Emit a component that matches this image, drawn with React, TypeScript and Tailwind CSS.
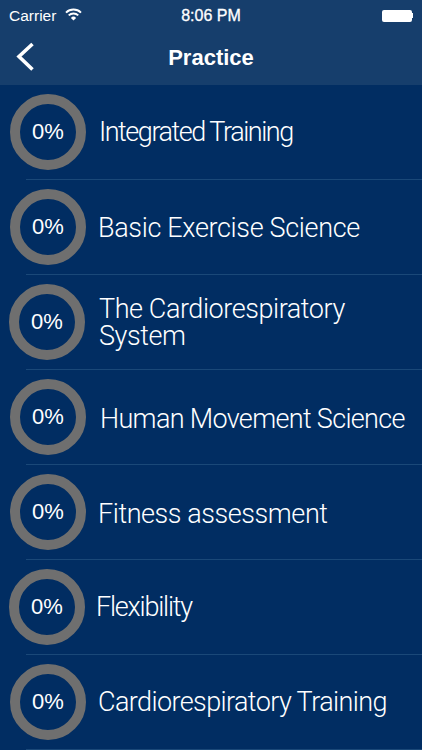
const rows = [
  { title: 'Integrated Training', circle: 'ml-[10px]', text: 'ml-[13px] mt-[2px] tracking-[-1.46px]' },
  { title: 'Basic Exercise Science', circle: 'ml-[10px]', text: 'ml-[12px] mt-[4px] tracking-[-0.33px]' },
  { title: 'The Cardiorespiratory System', circle: 'ml-[9px]', text: 'ml-[14px] mt-[2px] tracking-[-0.43px]' },
  { title: 'Human Movement Science', circle: 'ml-[10px]', text: 'ml-[14px] mt-[5px] tracking-[-0.67px] whitespace-nowrap' },
  { title: 'Fitness assessment', circle: 'ml-[10px]', text: 'ml-[12px] mt-[6px] tracking-[-0.43px]' },
  { title: 'Flexibility', circle: 'ml-[9px]', text: 'ml-[11px] mt-[2px] tracking-[-1.2px]' },
  { title: 'Cardiorespiratory Training', circle: 'ml-[10px]', text: 'ml-[12px] mt-[2px] tracking-[-0.6px] whitespace-nowrap' },
];

function Row({ title, circle, text }: { title: string; circle: string; text: string }) {
  return (
    <div className="relative flex h-[95px] shrink-0 items-center pb-[2px]">
      <div className={`${circle} flex h-[76px] w-[76px] shrink-0 items-center justify-center rounded-full border-[10px] border-[#6f6f6f] font-['Liberation_Sans',sans-serif] text-[22px] text-white`}>
        0%
      </div>
      <div className={`${text} w-[312px] font-['Roboto',sans-serif] text-[27px] leading-[27px] font-light text-white`}>{title}</div>
      <div className="absolute right-0 bottom-0 left-[26px] h-px bg-[#1a4878]" />
    </div>
  );
}

export default function App() {
  return (
    <div className="flex h-[750px] w-[422px] flex-col overflow-hidden bg-[#012d62]">
      <div className="h-[85px] shrink-0 bg-[#163e6c] font-['Liberation_Sans',sans-serif] text-white">
        <div className="grid h-[31px] grid-cols-3 items-center px-[9px] text-[15.5px]">
          <div className="flex items-center gap-[9px]">
            <span>Carrier</span>
            <svg width="17" height="13" viewBox="0 0 17 13" fill="none" stroke="white" strokeWidth="1.9" className="mb-[3px]">
              <path d="M1 4.6a10.8 10.8 0 0 1 15 0" />
              <path d="M3.7 7.4a7 7 0 0 1 9.6 0" />
              <path d="M8.5 12.6 5.9 9.9a3.7 3.7 0 0 1 5.2 0z" fill="white" stroke="none" />
            </svg>
          </div>
          <span className="text-center text-[16px] [-webkit-text-stroke:0.3px_white]">8:06 PM</span>
          <div className="flex items-center justify-end">
            <div className="h-[12px] w-[30px] rounded-[2px] bg-white" />
            <div className="h-[5px] w-[1.5px] bg-white" />
          </div>
        </div>
        <div className="relative flex h-[51px] items-center justify-center">
          <svg width="24" height="32" viewBox="0 0 24 32" fill="none" stroke="white" strokeWidth="3.6" className="absolute top-[10px] left-[14px]">
            <path d="M18.5 3 5 15.5 18.5 28.5" />
          </svg>
          <span className="mt-[2px] text-[22px] font-bold">Practice</span>
        </div>
      </div>
      {rows.map((r) => (
        <Row key={r.title} title={r.title} circle={r.circle} text={r.text} />
      ))}
    </div>
  );
}
